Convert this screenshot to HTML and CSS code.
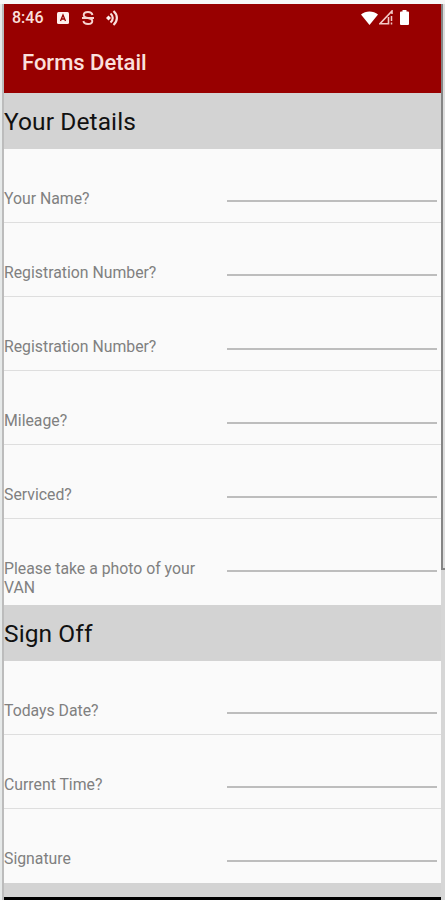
FILE: index.html
```html
<!DOCTYPE html>
<html lang="en">
<head>
    <meta charset="UTF-8">
    <meta name="viewport" content="width=device-width, initial-scale=1.0">
    <title>Forms Detail</title>
    <link rel="stylesheet" href="styles.css">
</head>
<body>
    <div class="frame">
        <div class="edge"></div>
        <div class="phone">
            <header>
                <div class="status-bar">
                    <span class="time">8:46</span>
                    <svg class="icon-app" width="12" height="12" viewBox="0 0 12 12">
                        <rect width="12" height="12" rx="1.5" fill="#fff0ee"/>
                        <path d="M3.5 9 6 3 8.500 9M4.500 7h3" fill="none" stroke="#980000" stroke-width="1.300"/>
                    </svg>
                    <svg class="icon-s" width="12" height="14" viewBox="0 0 12 14">
                        <path d="M10.500 4C10 2 8.300 1 6 1 3.500 1 1.700 2.200 1.700 4 1.700 6 3.500 6.500 6 7c2.500.5 4.300 1.200 4.300 3 0 1.800-1.800 3-4.300 3-2.500 0-4.200-1-4.600-3M0 7h12" fill="none" stroke="#f7d3d0" stroke-width="1.900"/>
                    </svg>
                    <svg class="icon-cast" width="13" height="16" viewBox="0 0 13 16">
                        <path d="M0 8 2.500 5.500 5 8 2.500 10.500z" fill="#fff0ee"/>
                        <path d="M4.500 3.500c3 2.500 3 6.500 0 9M7.500 1c4.500 4 4.500 10 0 14" fill="none" stroke="#fbdedb" stroke-width="2.200"/>
                    </svg>
                    <svg class="icon-wifi" width="17" height="14" viewBox="0 0 17 14">
                        <path d="M0 3.500C4.500-.6 12.500-.6 17 3.500L8.500 14z" fill="#fff"/>
                    </svg>
                    <svg class="icon-signal" width="14" height="15" viewBox="0 0 14 15">
                        <path d="M13 4V1L1 13.700h8.500V7" fill="none" stroke="#f3c9c6" stroke-width="1.600"/>
                        <path d="M12.500 6v5M12.500 12.500v2" stroke="#f3c9c6" stroke-width="1.500"/>
                    </svg>
                    <svg class="icon-battery" width="9" height="15" viewBox="0 0 9 15">
                        <path d="M2.500 0h4v1.500H8q1 0 1 1V14q0 1-1 1H1q-1 0-1-1V2.500q0-1 1-1h1.500z" fill="#fff"/>
                    </svg>
                </div>
                <h1>Forms Detail</h1>
            </header>
            <h2>Your Details</h2>
            <div class="row"><label for="name">Your Name?</label><input type="text" id="name"></div>
            <div class="row"><label for="reg1">Registration Number?</label><input type="text" id="reg1"></div>
            <div class="row"><label for="reg2">Registration Number?</label><input type="text" id="reg2"></div>
            <div class="row"><label for="mileage">Mileage?</label><input type="text" id="mileage"></div>
            <div class="row"><label for="serviced">Serviced?</label><input type="text" id="serviced"></div>
            <div class="row row-tall"><label for="photo">Please take a photo of your VAN</label><input type="text" id="photo"></div>
            <h2>Sign Off</h2>
            <div class="row"><label for="date">Todays Date?</label><input type="text" id="date"></div>
            <div class="row"><label for="time">Current Time?</label><input type="text" id="time"></div>
            <div class="row row-last"><label for="signature">Signature</label><input type="text" id="signature"></div>
            <div class="list-end"></div>
            <div class="nav-bar"></div>
        </div>
        <div class="scroll">
            <div class="scroll-thumb"></div>
        </div>
    </div>
</body>
</html>
```

FILE: styles.css
```css
* {
    box-sizing: border-box;
}
body {
    font-family: Roboto, sans-serif;
    margin: 0;
    background-color: #f7f7f7;
    overflow: hidden;
}
.frame {
    display: flex;
    height: 900px;
    padding-top: 4px;
}
.edge {
    width: 4px;
    background-color: #e6e9e9;
    border-right: 2px solid #bcbcbc;
}
.phone {
    width: 437px;
    height: 896px;
    background-color: #fafafa;
}
header {
    height: 88.5px;
    background-color: #980000;
    color: #fbe0dd;
}
.status-bar {
    display: flex;
    align-items: center;
    height: 27px;
    padding-left: 8px;
}
.time {
    width: 45px;
    font-size: 16px;
    font-weight: 500;
}
.icon-s {
    margin-left: 13px;
}
.icon-cast {
    margin-left: 12px;
}
.icon-wifi {
    margin-left: 242px;
}
.icon-signal {
    margin-left: 1px;
}
.icon-battery {
    margin-left: 7px;
}
h1 {
    margin: 0;
    padding-left: 18px;
    font-size: 22px;
    font-weight: 500;
    line-height: 63px;
}
h2 {
    margin: 0;
    height: 56px;
    background-color: #d3d3d3;
    color: #111;
    font-size: 24.5px;
    font-weight: 400;
    line-height: 58px;
    letter-spacing: 0.1px;
}
.row {
    display: flex;
    height: 74px;
    border-bottom: 1px solid #dedede;
}
.row label {
    width: 223px;
    padding: 40px 20px 0 0;
    color: #808080;
    font-size: 15.8px;
    line-height: 19px;
}
.row input {
    width: 210px;
    height: 53px;
    padding: 0;
    border: none;
    border-bottom: 2px solid #bdbdbd;
    background: none;
    outline: none;
}
.row-tall {
    height: 86px;
    border-bottom: none;
}
.row-last {
    border-bottom: none;
}
.list-end {
    height: 14px;
    background-color: #d3d3d3;
}
.nav-bar {
    height: 6px;
    background-color: #000;
}
.scroll {
    width: 4px;
    background-color: #d6d6d6;
}
.scroll-thumb {
    height: 566px;
    border-left: 2px solid #858585;
    border-bottom: 2px solid #858585;
    background-color: #ddd;
}
```
